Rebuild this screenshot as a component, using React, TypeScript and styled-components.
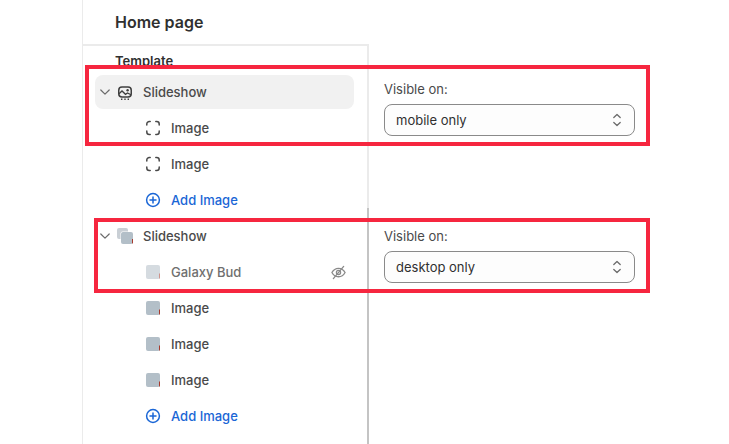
import React from "react"
import styled, { createGlobalStyle } from "styled-components"

const Global = createGlobalStyle`
    html, body {
        margin: 0;
        padding: 0;
        background: #fff;
    }
    body {
        font-family: Inter, "Liberation Sans", sans-serif;
        color: #303030;
    }
`

const Page = styled.div`
    position: relative;
    width: 729px;
    height: 444px;
    overflow: hidden;
    background: #fff;
`

const Shell = styled.div`
    margin-left: 82px;
    height: 444px;
    border-left: 1px solid #ebebeb;
    display: flex;
    flex-direction: column;
`

const PageTitle = styled.h1`
    margin: 0;
    height: 44px;
    padding-left: 32px;
    display: flex;
    align-items: center;
    font-size: 16px;
    font-weight: 600;
    color: #303030;
`

const Columns = styled.div`
    display: flex;
    flex: 1;
`

const Sidebar = styled.div`
    box-sizing: border-box;
    width: 286px;
    padding: 1px 13px 0 12px;
    border-top: 2px solid #ebebeb;
    border-right: 2px solid #ebebeb;
    position: relative;
`

const SidebarSeam = styled.div`
    position: absolute;
    top: 162px;
    bottom: 0;
    right: -2px;
    width: 2px;
    background: #c4c4c4;
`

const SectionLabel = styled.div`
    height: 28px;
    padding-left: 20px;
    display: flex;
    align-items: center;
    font-size: 13px;
    font-weight: 600;
    color: #303030;
`

const Row = styled.div<{ $active?: boolean; $child?: boolean }>`
    box-sizing: border-box;
    height: ${(p) => (p.$active ? "34px" : "36px")};
    margin-bottom: ${(p) => (p.$active ? "1px" : "0")};
    padding-left: ${(p) => (p.$child ? "50px" : "4px")};
    padding-right: 8px;
    display: flex;
    align-items: center;
    border-radius: 8px;
    background: ${(p) => (p.$active ? "#f1f1f1" : "transparent")};
    font-size: 13px;
    font-weight: 450;
    color: #4a4a4a;
`

const Chevron = styled.svg`
    width: 12px;
    height: 12px;
    margin-right: 6px;
    flex: none;
`

const IconSlot = styled.svg`
    width: 16px;
    height: 16px;
    flex: none;
    margin-right: 10px;
`

const ChildIcon = styled.svg`
    width: 16px;
    height: 16px;
    flex: none;
    margin-right: 10px;
`

const RowText = styled.span<{ $muted?: boolean; $link?: boolean }>`
    flex: 1;
    font-weight: ${(p) => (p.$link ? 500 : 450)};
    color: ${(p) => (p.$link ? "#1a66d6" : p.$muted ? "#6f6f6f" : "#4a4a4a")};
`

const Details = styled.div`
    flex: 1;
    padding: 37px 0 0 15px;
    display: flex;
    flex-direction: column;
    gap: 92px;
`

const Field = styled.div`
    width: 251px;
    display: flex;
    flex-direction: column;
    gap: 7px;
`

const FieldLabel = styled.div`
    font-size: 13px;
    line-height: 16px;
    color: #4a4a4a;
`

const Select = styled.div`
    box-sizing: border-box;
    height: 32px;
    padding: 0 11px;
    display: flex;
    align-items: center;
    justify-content: space-between;
    border: 1px solid #8a8a8a;
    border-radius: 8px;
    background: #fdfdfd;
    font-size: 13px;
    color: #303030;
`

const Callout = styled.div<{ $left: number; $top: number; $width: number; $height: number }>`
    position: absolute;
    box-sizing: border-box;
    left: ${(p) => p.$left}px;
    top: ${(p) => p.$top}px;
    width: ${(p) => p.$width}px;
    height: ${(p) => p.$height}px;
    border: 4px solid #f6263f;
`

const ChevronDown = () => (
    <Chevron viewBox="0 0 12 12" fill="none" stroke="#6b6b6b" strokeWidth="1.2" strokeLinecap="round" strokeLinejoin="round">
        <path d="M1.8 4l4.2 4.2L10.2 4" />
    </Chevron>
)

const SlideshowIcon = () => (
    <IconSlot viewBox="0 0 16 16" fill="none" stroke="#3f3f3f" strokeWidth="1.5">
        <rect x="1.75" y="3" width="12.5" height="10" rx="3.2" />
        <circle cx="10.6" cy="6.2" r="1.2" fill="#3f3f3f" stroke="none" />
        <path d="M2 9.800l3-2.800 3.500 3.300 2-1.400 3.500 1.900" strokeWidth="1.300" />
        <path d="M4 15.200h1.400M7.300 15.200h1.400M10.600 15.200H12" strokeWidth="1.500" />
    </IconSlot>
)

const StackIcon = () => (
    <IconSlot viewBox="0 0 16 16">
        <rect x="0" y="0" width="11" height="11" rx="2" fill="#c9cfd5" />
        <rect x="3.500" y="3.500" width="12.500" height="12.500" rx="2" fill="#fff" />
        <rect x="4" y="4" width="12" height="12" rx="2" fill="#b3bfc8" />
        <path d="M15 11h1v3.200a1.800 1.800 0 0 1-1 1.600z" fill="#a83a2c" />
    </IconSlot>
)

const FrameIcon = () => (
    <ChildIcon viewBox="0 0 16 16" fill="none" stroke="#4a4a4a" strokeWidth="1.500" strokeLinecap="round">
        <path d="M1.800 5V4A2.500 2.500 0 0 1 4.300 1.500H5.200" />
        <path d="M10.800 1.500h.900A2.500 2.500 0 0 1 14.200 4v1" />
        <path d="M14.200 11v1a2.500 2.500 0 0 1-2.500 2.500h-.900" />
        <path d="M5.200 14.500h-.900A2.500 2.500 0 0 1 1.800 12v-1" />
    </ChildIcon>
)

const ThumbIcon = ({ faded }: { faded?: boolean }) => (
    <ChildIcon viewBox="0 0 16 16">
        <g opacity={faded ? 0.55 : 1}>
            <rect x="1" y="1" width="14" height="14" rx="2" fill="#b3bfc8" />
            <path d="M14 9.500h1V13.500a1.500 1.500 0 0 1-1 1.400z" fill="#a83a2c" />
        </g>
    </ChildIcon>
)

const PlusIcon = () => (
    <ChildIcon viewBox="0 0 16 16" fill="none" stroke="#1a66d6" strokeWidth="1.500" strokeLinecap="round">
        <circle cx="8" cy="8" r="6.400" />
        <path d="M8 5v6M5 8h6" />
    </ChildIcon>
)

const HiddenIcon = () => (
    <svg width="15" height="15" viewBox="0 0 16 16" fill="none" stroke="#8a8a8a" strokeWidth="1.400" strokeLinecap="round">
        <path d="M1 8c1.600-3 4-4.500 7-4.500S13.400 5 15 8c-1.600 3-4 4.500-7 4.500S2.600 11 1 8z" />
        <circle cx="8" cy="8" r="2.200" />
        <path d="M13.500 1.500L2.500 14.500" />
    </svg>
)

const Updown = () => (
    <svg width="12" height="16" viewBox="0 0 12 16" fill="none" stroke="#6b6b6b" strokeWidth="1.300" strokeLinecap="round" strokeLinejoin="round">
        <path d="M2.800 5.500L6 2.500l3.200 3" />
        <path d="M2.800 10.500L6 13.500l3.200-3" />
    </svg>
)

const AddRow = () => (
    <Row $child>
        <PlusIcon />
        <RowText $link>Add Image</RowText>
    </Row>
)

export default function App() {
    return (
        <Page>
            <Global />
            <Shell>
                <PageTitle>Home page</PageTitle>
                <Columns>
                    <Sidebar>
                        <SidebarSeam />
                        <SectionLabel>Template</SectionLabel>
                        <Row $active>
                            <ChevronDown />
                            <SlideshowIcon />
                            <RowText>Slideshow</RowText>
                        </Row>
                        <Row $child>
                            <FrameIcon />
                            <RowText>Image</RowText>
                        </Row>
                        <Row $child>
                            <FrameIcon />
                            <RowText>Image</RowText>
                        </Row>
                        <AddRow />
                        <Row>
                            <ChevronDown />
                            <StackIcon />
                            <RowText>Slideshow</RowText>
                        </Row>
                        <Row $child>
                            <ThumbIcon faded />
                            <RowText $muted>Galaxy Bud</RowText>
                            <HiddenIcon />
                        </Row>
                        <Row $child>
                            <ThumbIcon />
                            <RowText>Image</RowText>
                        </Row>
                        <Row $child>
                            <ThumbIcon />
                            <RowText>Image</RowText>
                        </Row>
                        <Row $child>
                            <ThumbIcon />
                            <RowText>Image</RowText>
                        </Row>
                        <AddRow />
                    </Sidebar>
                    <Details>
                        <Field>
                            <FieldLabel>Visible on:</FieldLabel>
                            <Select>
                                mobile only
                                <Updown />
                            </Select>
                        </Field>
                        <Field>
                            <FieldLabel>Visible on:</FieldLabel>
                            <Select>
                                desktop only
                                <Updown />
                            </Select>
                        </Field>
                    </Details>
                </Columns>
            </Shell>
            <Callout $left={85} $top={65} $width={565} $height={81} />
            <Callout $left={94} $top={218} $width={556} $height={75} />
        </Page>
    )
}
